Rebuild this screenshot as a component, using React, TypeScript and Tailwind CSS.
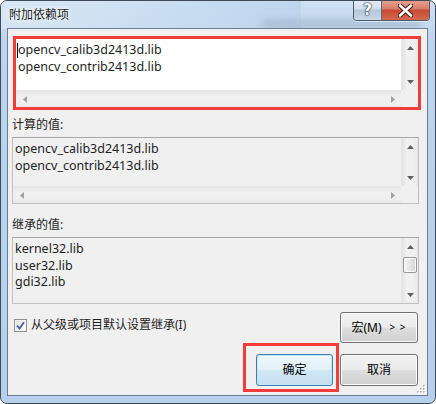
import React from "react";

const FONT = '"Noto Sans", "Noto Sans CJK SC", sans-serif';

function UpArrow() {
  return (
    <svg width="7" height="4" viewBox="0 0 7 4" className="block">
      <path d="M0 4 L3.5 0 L7 4 Z" fill="#606060" />
    </svg>
  );
}
function DownArrow() {
  return (
    <svg width="7" height="4" viewBox="0 0 7 4" className="block">
      <path d="M0 0 L3.5 4 L7 0 Z" fill="#606060" />
    </svg>
  );
}
function LeftArrow() {
  return (
    <svg width="4" height="7" viewBox="0 0 4 7" className="block">
      <path d="M4 0 L0 3.5 L4 7 Z" fill="#a0a0a0" />
    </svg>
  );
}
function RightArrow() {
  return (
    <svg width="4" height="7" viewBox="0 0 4 7" className="block">
      <path d="M0 0 L4 3.5 L0 7 Z" fill="#a0a0a0" />
    </svg>
  );
}

function VScroll({ thumb }: { thumb?: boolean }) {
  return (
    <div className="w-[17px] flex flex-col bg-[linear-gradient(90deg,#e3e3e3,#f0f0f0_30%,#f0f0f0_70%,#e8e8e8)] border-l border-[#e6e6e6]">
      <div className="h-[17px] flex items-center justify-center">
        <UpArrow />
      </div>
      <div className="flex-1 flex flex-col">
        {thumb && (
          <div className="mt-[2px] mx-[1px] h-[16px] rounded-[2px] border border-[#979797] bg-[linear-gradient(90deg,#f3f3f3,#e6e6e6_50%,#d5d5d5)] shadow-[inset_0_0_0_1px_#fafafa]" />
        )}
      </div>
      <div className="h-[17px] flex items-center justify-center">
        <DownArrow />
      </div>
    </div>
  );
}

function HScroll() {
  return (
    <div className="h-[17px] flex bg-[linear-gradient(180deg,#e6e6e6,#f0f0f0_30%,#f0f0f0_70%,#e8e8e8)] border-t border-[#e6e6e6]">
      <div className="w-[17px] flex items-center justify-center">
        <LeftArrow />
      </div>
      <div className="flex-1" />
      <div className="w-[17px] flex items-center justify-center">
        <RightArrow />
      </div>
    </div>
  );
}

function Lines({ items }: { items: string[] }) {
  return (
    <div className="pl-[2px] text-[12.5px] leading-[16.5px] text-[#1e1e1e] whitespace-nowrap">
      {items.map((t) => (
        <div key={t}>{t}</div>
      ))}
    </div>
  );
}

function Button({
  children,
  def,
  className,
}: {
  children: React.ReactNode;
  def?: boolean;
  className?: string;
}) {
  return (
    <div
      className={
        "flex items-center justify-center rounded-[3px] border text-[12px] text-[#000] " +
        (def
          ? "border-[#3c7fb1] bg-[linear-gradient(180deg,#f0f8fd_0%,#e2f0f9_48%,#d0e7f5_52%,#c3dff0_100%)] shadow-[inset_0_0_0_1px_#c4e5f6] "
          : "border-[#707070] bg-[linear-gradient(180deg,#f2f2f2_0%,#ebebeb_48%,#dddddd_52%,#cfcfcf_100%)] shadow-[inset_0_0_0_1px_#fcfcfc] ") +
        (className ?? "")
      }
    >
      {children}
    </div>
  );
}

export default function App() {
  return (
    <div
      className="w-[436px] h-[404px] flex flex-col rounded-[7px] border border-[#3e4a58] bg-[linear-gradient(180deg,#cfe0f2_0%,#bcd5ee_10%,#b6d0eb_100%)] pl-[6px] pr-[7px] pb-[7px] relative overflow-hidden"
      style={{ fontFamily: FONT }}
    >
      {/* glass highlights */}
      <div className="absolute left-0 top-0 w-[300px] h-[28px] bg-[linear-gradient(100deg,#dbe8f5_0%,#cfe1f2_40%,#bad3ec_100%)] opacity-80 pointer-events-none" />
      <div className="absolute left-[260px] top-[18px] w-[160px] h-[10px] rounded-full bg-[#8fa4ba] opacity-40 blur-[3px] pointer-events-none" />

      {/* title bar */}
      <div className="h-[27px] flex items-start relative">
        <div className="mt-[6px] ml-[2px] text-[12px] leading-[16px] text-[#1c1c1c] [text-shadow:0_0_6px_#ffffff,0_0_3px_#ffffff]">
          附加依赖项
        </div>
        <div className="flex-1" />
        <div className="mt-[-1px] mr-[-2px] flex h-[21px] rounded-b-[4px] border border-t-0 border-[#4a5b70] overflow-hidden shadow-[0_1px_0_#ffffff80]">
          <div className="w-[28px] flex items-center justify-center border-r border-[#5a6b80] bg-[linear-gradient(180deg,#e6eef7_0%,#d2deeb_45%,#b4c6da_50%,#c9d8e8_100%)]">
            <span className="text-[15px] font-bold leading-none text-white [text-shadow:0_0_1px_#2d3b4c,0_0_1px_#2d3b4c,0_0_2px_#2d3b4c]" style={{ fontFamily: '"DejaVu Sans", sans-serif' }}>
              ?
            </span>
          </div>
          <div className="w-[47px] flex items-center justify-center bg-[linear-gradient(180deg,#e8a393_0%,#d87c68_45%,#c74a33_50%,#d2694f_100%)]">
            <svg width="15" height="13" viewBox="0 0 15 13">
              <path
                d="M2 1.5 L13 11.5 M13 1.5 L2 11.5"
                stroke="#3b1c18"
                strokeWidth="4.6"
                strokeLinecap="round"
              />
              <path
                d="M2 1.5 L13 11.5 M13 1.5 L2 11.5"
                stroke="#ffffff"
                strokeWidth="2.6"
                strokeLinecap="round"
              />
            </svg>
          </div>
        </div>
      </div>

      {/* client area */}
      <div className="flex-1 flex flex-col border border-[#6b7d91] bg-[#f0f0f0] relative">
        {/* editable box in red frame */}
        <div className="ml-[5px] mr-[6px] mt-[7px] h-[74px] border-[3px] border-[#f23b3b] flex flex-col bg-white">
          <div className="flex flex-1 min-h-0">
            <div className="flex-1 relative pt-[3px]">
              <div className="absolute left-[1px] top-[4px] w-[1px] h-[15px] bg-black" />
              <Lines items={["opencv_calib3d2413d.lib", "opencv_contrib2413d.lib"]} />
            </div>
            <VScroll />
          </div>
          <div className="flex">
            <div className="flex-1">
              <HScroll />
            </div>
            <div className="w-[17px] h-[17px] bg-[#f0f0f0]" />
          </div>
        </div>

        <div className="ml-[4px] mt-[7px] h-[16px] text-[12px] leading-[16px] text-[#1e1e1e]">计算的值:</div>

        <div className="ml-[4px] mr-[8px] mt-[4px] h-[67px] border border-[#c0c0c0] border-t-[#a8a8a8] flex flex-col bg-[#f0f0f0]">
          <div className="flex flex-1 min-h-0">
            <div className="flex-1 pt-[3px]">
              <Lines items={["opencv_calib3d2413d.lib", "opencv_contrib2413d.lib"]} />
            </div>
            <VScroll />
          </div>
          <div className="flex">
            <div className="flex-1">
              <HScroll />
            </div>
            <div className="w-[17px] h-[17px] bg-[#f0f0f0]" />
          </div>
        </div>

        <div className="ml-[4px] mt-[13px] h-[16px] text-[12px] leading-[16px] text-[#1e1e1e]">继承的值:</div>

        <div className="ml-[4px] mr-[8px] mt-[4px] h-[67px] border border-[#c0c0c0] border-t-[#a8a8a8] flex bg-[#f0f0f0]">
          <div className="flex-1 pt-[3px]">
            <Lines items={["kernel32.lib", "user32.lib", "gdi32.lib"]} />
          </div>
          <VScroll thumb />
        </div>

        {/* checkbox row */}
        <div className="mt-[8px] flex items-start">
          <div className="ml-[6px] mt-[5px] flex items-center gap-[4px]">
            <div className="w-[13px] h-[13px] border border-[#8e8f8f] bg-[linear-gradient(135deg,#dcdcdc,#ffffff)] flex items-center justify-center shadow-[inset_0_0_0_1px_#f4f4f4]">
              <svg width="9" height="9" viewBox="0 0 9 9">
                <path d="M1 4.5 L3.5 7.5 L8 1.2" fill="none" stroke="#4a5f97" strokeWidth="1.8" />
              </svg>
            </div>
            <span className="text-[12px] leading-[16px] text-[#1e1e1e]">从父级或项目默认设置继承(I)</span>
          </div>
          <div className="flex-1" />
          <Button className="mr-[9px] w-[78px] h-[31px] gap-[8px]">
            <span>宏(M)</span>
            <span className="text-[10px] tracking-[1px]">&gt; &gt;</span>
          </Button>
        </div>

        {/* buttons row */}
        <div className="mt-[11px] flex justify-end gap-[7px] mr-[9px]">
          <Button def className="w-[77px] h-[32px]">
            确定
          </Button>
          <Button className="w-[78px] h-[32px]">取消</Button>
        </div>

        {/* annotation around OK */}
        <div className="absolute left-[235px] top-[314px] w-[96px] h-[49px] border-[3px] border-[#f23b3b] pointer-events-none" />

        {/* resize grip */}
        <svg className="absolute right-[1px] bottom-[1px]" width="11" height="11" viewBox="0 0 11 11">
          {[
            [9, 9], [6, 9], [3, 9], [9, 6], [6, 6], [9, 3],
          ].map(([x, y], i) => (
            <g key={i}>
              <rect x={x} y={y} width="1.5" height="1.5" fill="#ffffff" />
              <rect x={x - 1} y={y - 1} width="1.5" height="1.5" fill="#a7a7a7" />
            </g>
          ))}
        </svg>
      </div>
    </div>
  );
}
